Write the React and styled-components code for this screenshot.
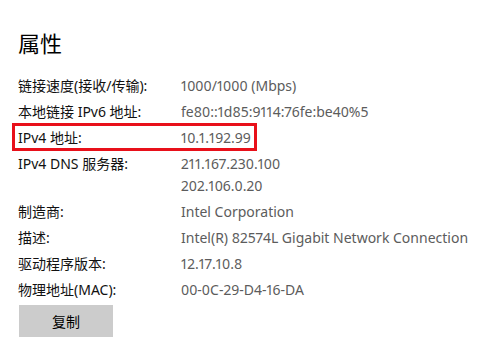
import React from 'react';
import styled, { createGlobalStyle } from 'styled-components';

const GlobalStyle = createGlobalStyle`
  html, body {
    margin: 0;
    padding: 0;
    background: #ffffff;
  }
  body {
    font-family: "Noto Sans", "Noto Sans CJK SC", sans-serif;
    -webkit-font-smoothing: antialiased;
  }
`;

const Page = styled.div`
  width: 498px;
  height: 346px;
  box-sizing: border-box;
  padding: 28px 0 0 18px;
  overflow: hidden;
`;

const Title = styled.h1`
  margin: 0 0 17px;
  font-size: 22px;
  line-height: 30px;
  font-weight: 400;
  color: #000;
`;

const Table = styled.div`
  display: flex;
  flex-direction: column;
  gap: 4px;
`;

const Row = styled.div`
  position: relative;
  display: grid;
  grid-template-columns: 163px auto;
  font-size: 14px;
  line-height: 22px;
  font-variant-numeric: proportional-nums;

  ${({ $highlight }) =>
    $highlight &&
    `
    &::after {
      content: '';
      position: absolute;
      left: -6px;
      top: -4px;
      width: 245px;
      height: 28px;
      box-sizing: border-box;
      border: 3px solid #e8101a;
      pointer-events: none;
    }
  `}
`;

const Label = styled.div`
  color: #111;
`;

const Value = styled.div`
  color: #5c5c5c;
  display: flex;
  flex-direction: column;
`;

const CopyButton = styled.button`
  margin-top: 4px;
  margin-left: 1px;
  width: 94px;
  height: 32px;
  border: none;
  background: #cccccc;
  color: #000;
  font-family: "Noto Sans CJK SC", sans-serif;
  font-size: 14px;
  padding: 0;
`;

const rows = [
  { label: '链接速度(接收/传输):', value: ['1000/1000 (Mbps)'] },
  { label: '本地链接 IPv6 地址:', value: ['fe80::1d85:9114:76fe:be40%5'] },
  { label: 'IPv4 地址:', value: ['10.1.192.99'], highlight: true },
  { label: 'IPv4 DNS 服务器:', value: ['211.167.230.100', '202.106.0.20'] },
  { label: '制造商:', value: ['Intel Corporation'] },
  { label: '描述:', value: ['Intel(R) 82574L Gigabit Network Connection'] },
  { label: '驱动程序版本:', value: ['12.17.10.8'] },
  { label: '物理地址(MAC):', value: ['00-0C-29-D4-16-DA'] },
];

const App = () => {
  return (
    <Page>
      <GlobalStyle />
      <Title>属性</Title>
      <Table>
        {rows.map((r) => (
          <Row key={r.label} $highlight={r.highlight}>
            <Label>{r.label}</Label>
            <Value>
              {r.value.map((v) => (
                <span key={v}>{v}</span>
              ))}
            </Value>
          </Row>
        ))}
      </Table>
      <CopyButton>复制</CopyButton>
    </Page>
  );
};

export default App;
